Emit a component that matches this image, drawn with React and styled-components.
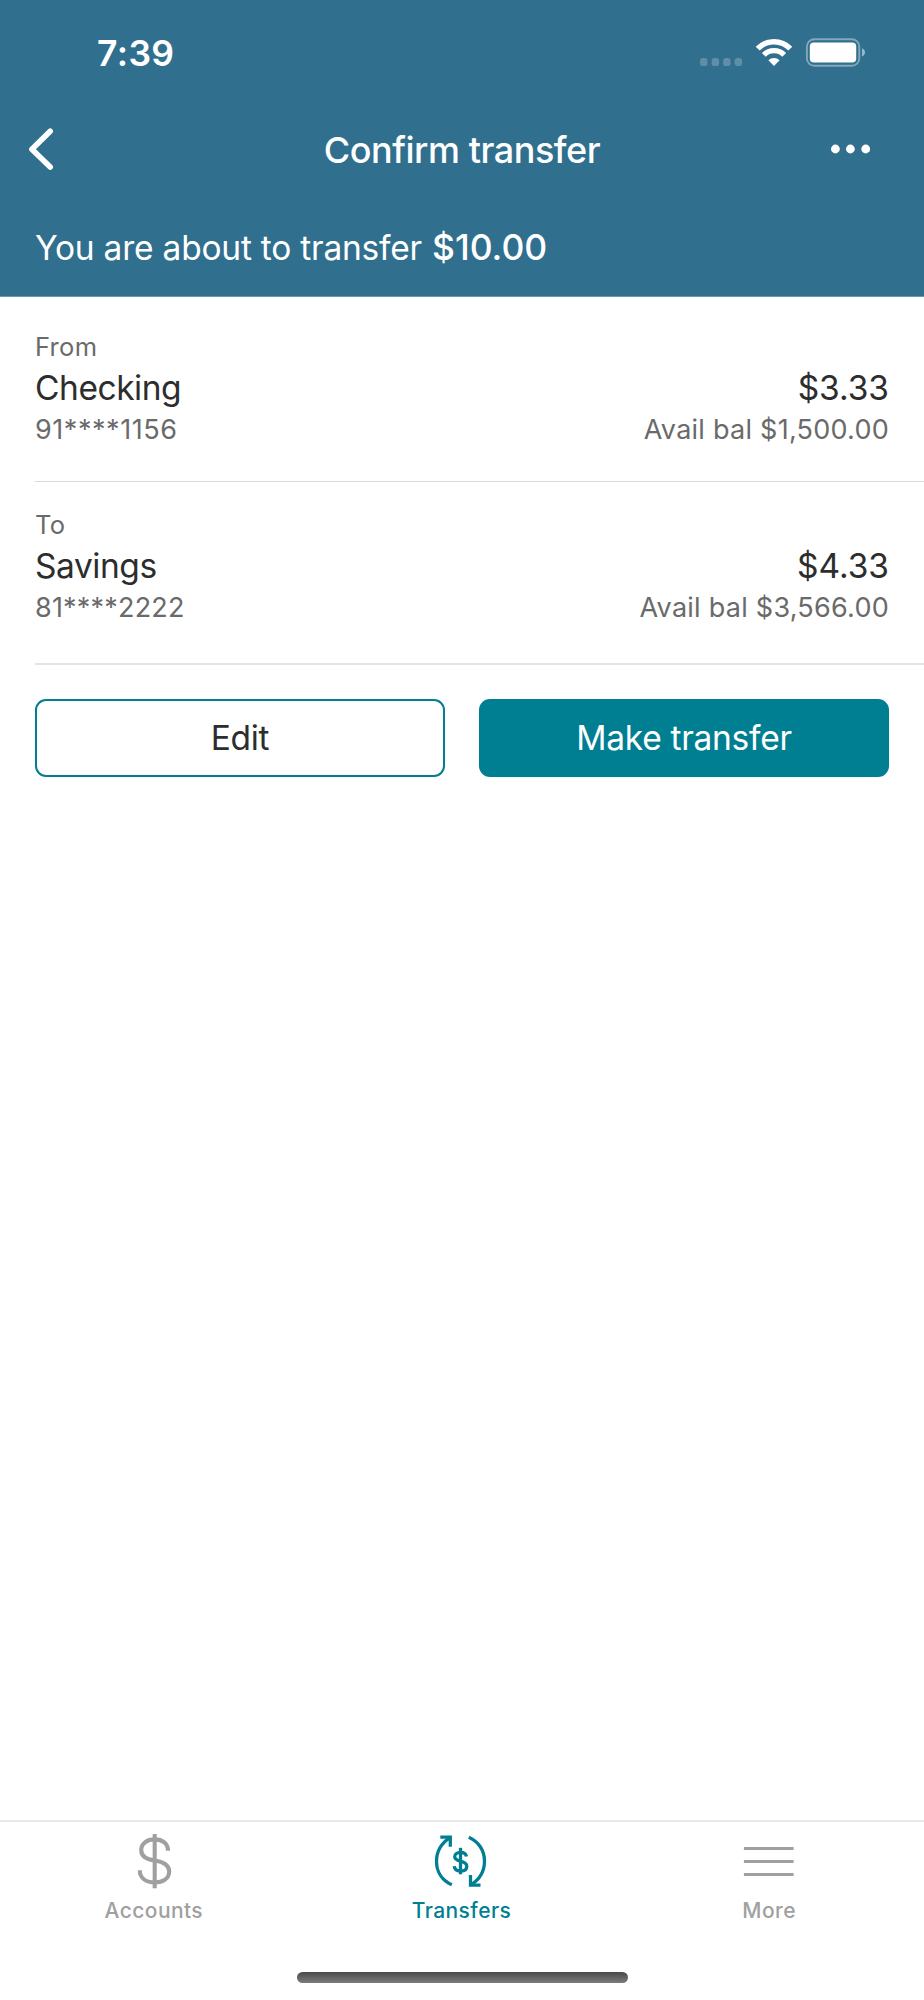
import React from "react";
import styled, { createGlobalStyle, ThemeProvider } from "styled-components";

const theme = {
  colors: {
    header: "#306f8e",
    primary: "#007f92",
    text: "#2d2d2d",
    muted: "#6a6a6a",
    inactive: "#a0a0a0",
    divider: "#dadada",
    background: "#ffffff",
  },
};

const GlobalStyle = createGlobalStyle`
  * {
    box-sizing: border-box;
  }

  body {
    margin: 0;
    background: #ffffff;
    font-family: Inter, "Liberation Sans", sans-serif;
  }

  svg {
    display: block;
  }
`;

const Screen = styled.div`
  display: flex;
  flex-direction: column;
  width: 924px;
  height: 2000px;
  background: ${({ theme }) => theme.colors.background};
  color: ${({ theme }) => theme.colors.text};
`;

const Header = styled.header`
  height: 297px;
  background: ${({ theme }) => theme.colors.header};
  border-bottom: 1px solid #6b98ae;
  color: #ffffff;
`;

const StatusBar = styled.div`
  display: flex;
  align-items: center;
  justify-content: space-between;
  height: 106px;
  padding: 0 58px 0 97px;
`;

const Time = styled.span`
  font-size: 35.5px;
  font-weight: 600;
  letter-spacing: 0.4px;
`;

const NavBar = styled.div`
  display: grid;
  grid-template-columns: 1fr auto 1fr;
  align-items: center;
  height: 88px;
  padding: 0 28px;
`;

const Title = styled.h1`
  margin: 0;
  font-size: 36px;
  font-weight: 500;
  letter-spacing: -0.47px;
`;

const IconButton = styled.button`
  display: flex;
  padding: 0;
  border: none;
  background: none;
  color: inherit;
`;

const MenuButton = styled(IconButton)`
  justify-self: end;
  margin-right: 26px;
`;

const Summary = styled.p`
  display: flex;
  align-items: baseline;
  margin: 0;
  padding: 32px 35px 0;
  font-size: 33.5px;
  line-height: 44px;
  letter-spacing: -0.22px;
`;

const SummaryAmount = styled.strong`
  margin-left: 10px;
  font-size: 35.5px;
  font-weight: 500;
  letter-spacing: 0;
`;

const Content = styled.main`
  flex: 1;
`;

const AccountRow = styled.section`
  display: flex;
  justify-content: space-between;
  align-items: flex-end;
  margin-left: 35px;
  padding: ${({ $first }) => ($first ? "30px 35px 31px 0" : "23px 35px 35px 0")};
  border-bottom: ${({ $first, theme }) =>
    $first ? `1px solid ${theme.colors.divider}` : "2px solid #e4e4e4"};
`;

const AccountColumn = styled.div`
  text-align: ${({ $align }) => $align || "left"};
`;

const Label = styled.div`
  margin-bottom: 1px;
  font-size: 25.5px;
  line-height: 40px;
  letter-spacing: 0.3px;
  color: ${({ theme }) => theme.colors.muted};
`;

const Name = styled.div`
  font-size: 33.5px;
  line-height: 41px;
  letter-spacing: -0.45px;
`;

const Amount = styled(Name)`
  letter-spacing: -0.05px;
`;

const Detail = styled.div`
  font-size: 27px;
  line-height: 41px;
  letter-spacing: ${({ $tracking }) => $tracking || "0.25px"};
  color: ${({ theme }) => theme.colors.muted};
`;

const Actions = styled.div`
  display: grid;
  grid-template-columns: 1fr 1fr;
  gap: 34px;
  padding: 34px 35px 0;
`;

const Button = styled.button`
  height: 78px;
  padding: 0;
  border: 2px solid ${({ theme }) => theme.colors.primary};
  border-radius: 11px;
  background: ${({ $primary, theme }) =>
    $primary ? theme.colors.primary : theme.colors.background};
  color: ${({ $primary, theme }) => ($primary ? "#ffffff" : theme.colors.text)};
  font-family: inherit;
  font-size: 33.5px;
  letter-spacing: -0.28px;
`;

const TabBar = styled.nav`
  display: grid;
  grid-template-columns: repeat(3, 1fr);
  height: 151px;
  padding: 11px 1px 0 0;
  border-top: 2px solid #eaeaea;
`;

const Tab = styled.a`
  display: flex;
  flex-direction: column;
  align-items: center;
  color: ${({ $active, theme }) =>
    $active ? theme.colors.primary : theme.colors.inactive};
`;

const TabLabel = styled.span`
  font-size: 21px;
  font-weight: 500;
  line-height: 44px;
  letter-spacing: 0.42px;
`;

const HomeArea = styled.div`
  height: 29px;
`;

const HomeIndicator = styled.div`
  width: 331px;
  height: 11px;
  margin: 1px auto 0;
  border-radius: 6px;
  background: linear-gradient(#484848, #7c7c7c);
`;

const StatusIcons = () => (
  <svg width="166" height="30" viewBox="0 0 166 30" fill="none">
    <g fill="#ffffff" opacity="0.22">
      <rect x="0" y="20" width="7.5" height="8" rx="2.8" />
      <rect x="11.6" y="20" width="7.5" height="8" rx="2.8" />
      <rect x="23.1" y="20" width="7.5" height="8" rx="2.8" />
      <rect x="34.6" y="20" width="7.5" height="8" rx="2.8" />
    </g>
    <path d="M57.7 10.6A22.8 22.8 0 0 1 90.3 10.6" stroke="#fff" strokeWidth="5.6" />
    <path d="M63.8 16.9A14.3 14.3 0 0 1 84.2 16.9" stroke="#fff" strokeWidth="5.4" />
    <path d="M74 28L68.4 22.3A8.1 8.1 0 0 1 79.6 22.3Z" fill="#fff" />
    <rect
      x="106.9"
      y="1.2"
      width="52.4"
      height="26.6"
      rx="7.5"
      stroke="#fff"
      strokeOpacity="0.4"
      strokeWidth="1.9"
    />
    <rect x="109.8" y="4.6" width="46.4" height="19.8" rx="4" fill="#fff" />
    <path d="M162 10.2c1.9.7 3 2.2 3 4.1s-1.1 3.4-3 4.1z" fill="#fff" opacity="0.5" />
  </svg>
);

const BackIcon = () => (
  <svg width="28" height="44" viewBox="28 128 28 44" fill="none">
    <path
      d="M50.2 131.2L31.9 149.2L50.2 167"
      stroke="currentColor"
      strokeWidth="5.6"
      strokeLinecap="round"
      strokeLinejoin="round"
    />
  </svg>
);

const DotsIcon = () => (
  <svg width="40" height="12" viewBox="0 0 40 12" fill="currentColor">
    <circle cx="5.4" cy="5" r="4.4" />
    <circle cx="20.4" cy="5" r="4.4" />
    <circle cx="35.7" cy="5" r="4.4" />
  </svg>
);

const DollarIcon = () => (
  <svg
    width="56"
    height="56"
    viewBox="0 0 56 56"
    fill="none"
    stroke="currentColor"
    strokeWidth="4.1"
  >
    <path d="M28.7 1V55.3" />
    <path d="M42 17.7C42 10.6 36.5 6.4 28.7 6.4S15.2 10.5 15.2 17C15.2 24 21 26.5 28.7 27.5C37 28.8 43.2 31.5 43.2 38.5C43.2 45.5 37 49.4 28.7 49.4S13.8 45.5 13.8 37.3" />
  </svg>
);

const TransferIcon = () => (
  <svg
    width="56"
    height="56"
    viewBox="-0.5 0 56 56"
    fill="none"
    stroke="currentColor"
    strokeWidth="3.3"
  >
    <path d="M18.3 51.8C9 47.5 3 39 3 28.5C3 18.5 8 10 16.6 4.6" />
    <path d="M6.8 4.2H16.8V13.8" />
    <path d="M35.3 4.2C45 8.5 51 17.5 51 28C51 38 46 46.5 37.4 51.8" />
    <path d="M47 52.2H37V42" />
    <path d="M27 14.8V41.3" />
    <path d="M32.9 23.5C32.6 20.8 30.3 19.3 27 19.3S21.2 21 21.2 23.8S23.8 27.4 27 28.2S33.3 30.3 33.3 33.4S30.6 38 27 38S21 36.4 20.8 33.2" />
  </svg>
);

const MoreIcon = () => (
  <svg
    width="56"
    height="56"
    viewBox="-0.9 0 56 56"
    fill="none"
    stroke="currentColor"
    strokeWidth="3"
  >
    <path d="M2 15.5H51.7M2 28.5H51.7M2 41.5H51.7" />
  </svg>
);

const accounts = [
  {
    label: "From",
    name: "Checking",
    number: "91****1156",
    tracking: "0.55px",
    amount: "$3.33",
    available: "Avail bal $1,500.00",
  },
  {
    label: "To",
    name: "Savings",
    number: "81****2222",
    tracking: "0.2px",
    amount: "$4.33",
    available: "Avail bal $3,566.00",
  },
];

const tabs = [
  { label: "Accounts", icon: DollarIcon },
  { label: "Transfers", icon: TransferIcon, active: true },
  { label: "More", icon: MoreIcon },
];

function App() {
  return (
    <ThemeProvider theme={theme}>
      <GlobalStyle />
      <Screen>
        <Header>
          <StatusBar>
            <Time>7:39</Time>
            <StatusIcons />
          </StatusBar>
          <NavBar>
            <IconButton aria-label="Back">
              <BackIcon />
            </IconButton>
            <Title>Confirm transfer</Title>
            <MenuButton aria-label="Menu">
              <DotsIcon />
            </MenuButton>
          </NavBar>
          <Summary>
            You are about to transfer
            <SummaryAmount>$10.00</SummaryAmount>
          </Summary>
        </Header>
        <Content>
          {accounts.map((account, index) => (
            <AccountRow key={account.label} $first={index === 0}>
              <AccountColumn>
                <Label>{account.label}</Label>
                <Name>{account.name}</Name>
                <Detail $tracking={account.tracking}>{account.number}</Detail>
              </AccountColumn>
              <AccountColumn $align="right">
                <Amount>{account.amount}</Amount>
                <Detail>{account.available}</Detail>
              </AccountColumn>
            </AccountRow>
          ))}
          <Actions>
            <Button>Edit</Button>
            <Button $primary>Make transfer</Button>
          </Actions>
        </Content>
        <TabBar>
          {tabs.map(({ label, icon: Icon, active }) => (
            <Tab key={label} $active={active}>
              <Icon />
              <TabLabel>{label}</TabLabel>
            </Tab>
          ))}
        </TabBar>
        <HomeArea>
          <HomeIndicator />
        </HomeArea>
      </Screen>
    </ThemeProvider>
  );
}

export default App;
